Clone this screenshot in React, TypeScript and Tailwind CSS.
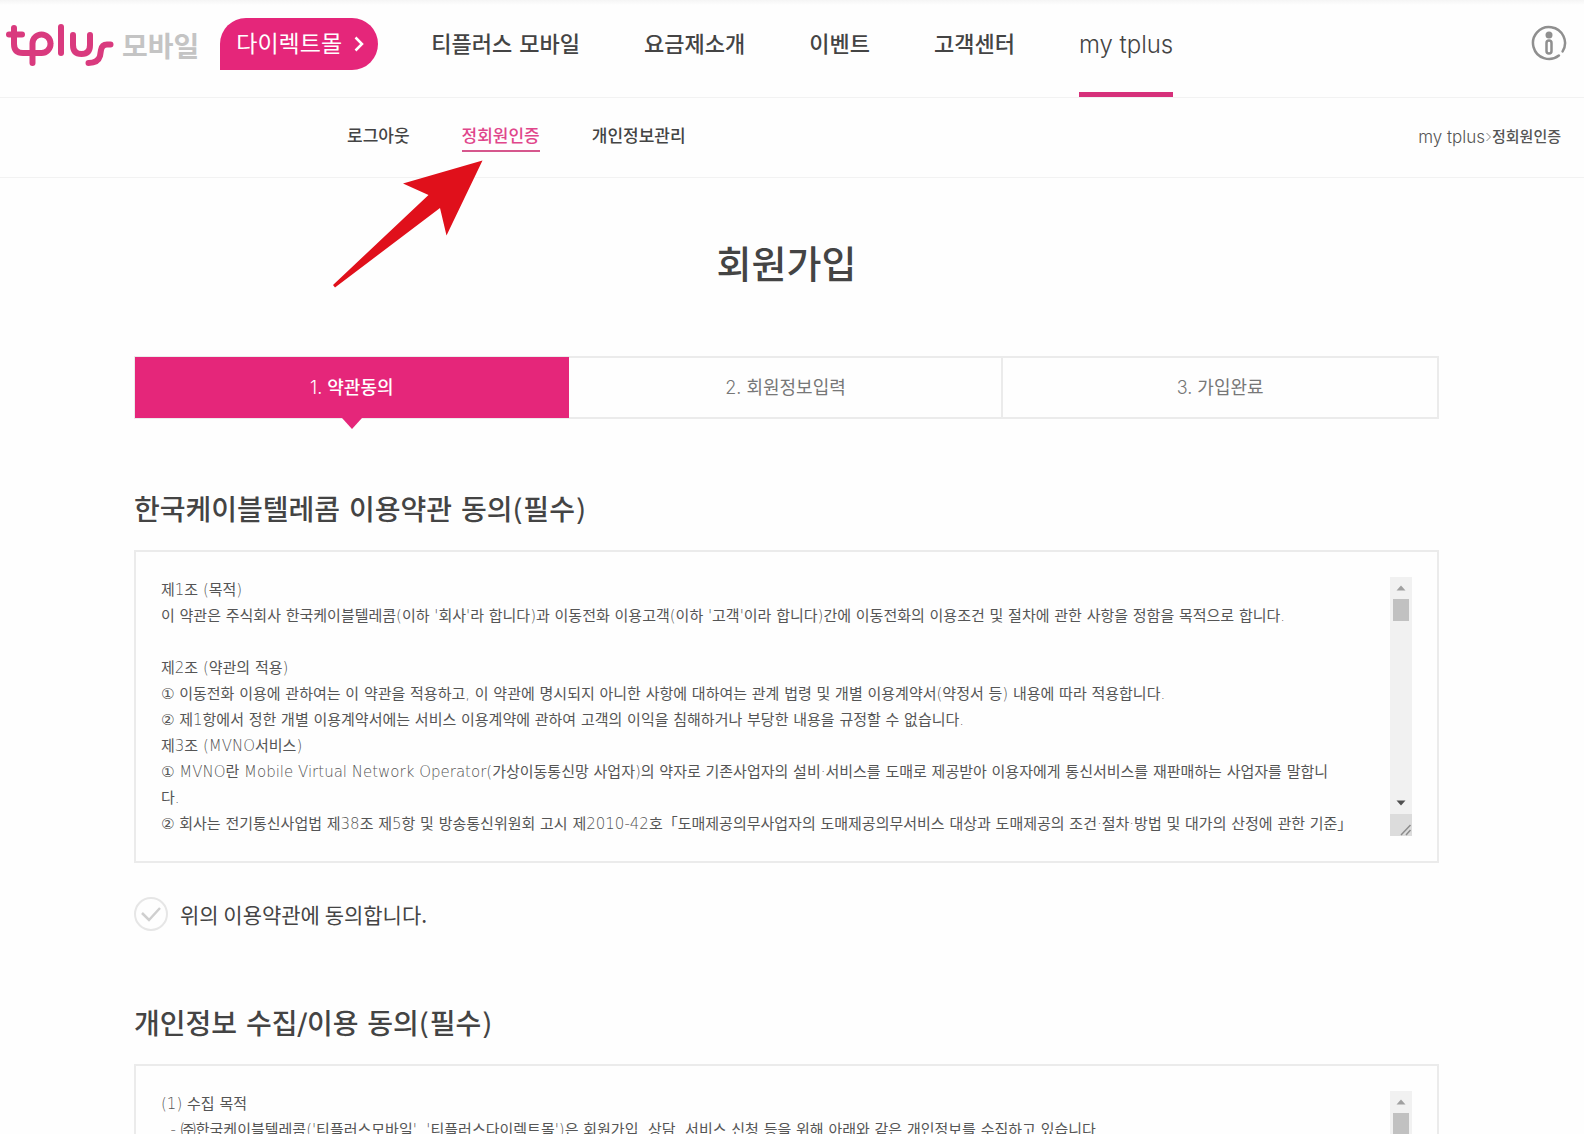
import React from "react";

const MAIN_MENU = [
  { label: "티플러스 모바일", active: false },
  { label: "요금제소개", active: false },
  { label: "이벤트", active: false },
  { label: "고객센터", active: false },
  { label: "my tplus", active: true },
];

const SUB_MENU = [
  { label: "로그아웃", active: false },
  { label: "정회원인증", active: true },
  { label: "개인정보관리", active: false },
];

const TERMS = `제1조 (목적)
이 약관은 주식회사 한국케이블텔레콤(이하 '회사'라 합니다)과 이동전화 이용고객(이하 '고객'이라 합니다)간에 이동전화의 이용조건 및 절차에 관한 사항을 정함을 목적으로 합니다.

제2조 (약관의 적용)
① 이동전화 이용에 관하여는 이 약관을 적용하고, 이 약관에 명시되지 아니한 사항에 대하여는 관계 법령 및 개별 이용계약서(약정서 등) 내용에 따라 적용합니다.
② 제1항에서 정한 개별 이용계약서에는 서비스 이용계약에 관하여 고객의 이익을 침해하거나 부당한 내용을 규정할 수 없습니다.
제3조 (MVNO서비스)
① MVNO란 Mobile Virtual Network Operator(가상이동통신망 사업자)의 약자로 기존사업자의 설비·서비스를 도매로 제공받아 이용자에게 통신서비스를 재판매하는 사업자를 말합니
다.
② 회사는 전기통신사업법 제38조 제5항 및 방송통신위원회 고시 제2010-42호「도매제공의무사업자의 도매제공의무서비스 대상과 도매제공의 조건·절차·방법 및 대가의 산정에 관한 기준」`;

const PRIVACY = `(1) 수집 목적
  - ㈜한국케이블텔레콤('티플러스모바일', '티플러스다이렉트몰')은 회원가입, 상담, 서비스 신청 등을 위해 아래와 같은 개인정보를 수집하고 있습니다.`;

function Logo() {
  return (
    <svg width="108" height="44" viewBox="6 24 108 44" fill="none" stroke="#d93a7e" strokeWidth="6" strokeLinecap="round" strokeLinejoin="round" aria-label="tplus" role="img">
      <path d="M14 28V44Q14 53 23 53H41A9 9 0 0 0 50.500 43.500A9 9 0 0 0 41.500 34.500A9 9 0 0 0 32.500 43.500V63" />
      <path d="M9 34.500H22" />
      <path d="M61 27V53" />
      <path d="M73 35V45Q73 54 81.500 54Q90 54 90 45V35" />
      <path d="M110.500 44.500H107Q102 44.500 101 50L100 56Q98 63 88.500 63" />
    </svg>
  );
}

function InfoIcon() {
  return (
    <svg width="36" height="36" viewBox="0 0 36 36" fill="none" stroke="#8f8f8f" strokeWidth="2.500" strokeLinecap="round">
      <path d="M27 31.200A16 16 0 1 1 31 27.300" transform="rotate(-4 18 18)" />
      <circle cx="18" cy="10" r="3.500" fill="#8f8f8f" stroke="none" />
      <rect x="15.500" y="15.500" width="5" height="13" rx="2.500" />
    </svg>
  );
}

function Scrollbar() {
  return (
    <div className="flex w-[22px] shrink-0 flex-col bg-[#f1f1f1]" aria-hidden="true">
      <svg width="22" height="22" viewBox="0 0 22 22">
        <path d="M6.500 13.500L11 8.500L15.500 13.500Z" fill="#a0a0a0" />
      </svg>
      <div className="mx-[3px] h-[22px] bg-[#c1c1c1]" />
      <div className="grow" />
      <svg width="22" height="22" viewBox="0 0 22 22">
        <path d="M6.500 8.500L11 13.500L15.500 8.500Z" fill="#505050" />
      </svg>
      <svg width="22" height="22" viewBox="0 0 22 22" className="bg-[#dcdcdc]">
        <path d="M11 21L20.500 11M16 21L20.500 16" stroke="#8c8c8c" strokeWidth="1.500" />
      </svg>
    </div>
  );
}

function TermsBox({ id, text }: { id: string; text: string }) {
  return (
    <div className="flex border-2 border-[#ebebeb] p-[25px]">
      <textarea
        aria-labelledby={id}
        readOnly
        defaultValue={text}
        className="h-[259px] min-w-0 grow resize-none overflow-hidden text-[15px] leading-[26px] text-[#555] outline-none"
      />
      <Scrollbar />
    </div>
  );
}

export default function App() {
  return (
    <div className="relative h-screen overflow-x-hidden overflow-y-auto bg-[#fefefe] font-['DejaVu_Sans_Light','DejaVu_Sans','Noto_Sans_CJK_KR',sans-serif] text-[#444] [scrollbar-width:none]">
      <header className="flex h-[98px] items-start border-b border-[#f2f2f2] bg-linear-to-b from-[#f5f5f5] to-[#fefefe] to-[5px] pr-[17px] pl-[6px]">
        <a href="#" className="mt-6 flex items-start gap-2">
          <Logo />
          <span className="pt-[2px] text-[28px] leading-[44px] font-bold text-[#c4c4c4]">모바일</span>
        </a>
        <a href="#" className="mt-[18px] ml-[21px] flex h-[52px] w-[158px] items-center gap-3 rounded-[26px] rounded-bl-none bg-[#e5267a] pl-4 text-[23px] text-white">
          다이렉트몰
          <svg width="10" height="16" viewBox="0 0 10 16" fill="none" stroke="currentColor" strokeWidth="2.500">
            <path d="M1.500 1.500L8 8L1.500 14.500" />
          </svg>
        </a>
        <nav className="ml-[53px] flex h-[97px] gap-16">
          {MAIN_MENU.map((m) => (
            <a
              key={m.label}
              href="#"
              className={
                m.active
                  ? "border-b-[5px] border-[#d6307a] pt-[28px] font-[Inter,sans-serif] text-[24px] leading-[33px] font-light whitespace-nowrap"
                  : "pt-[28px] text-[22px] leading-[33px] font-medium whitespace-nowrap"
              }
            >
              {m.label}
            </a>
          ))}
        </nav>
        <button type="button" aria-label="안내" className="mt-[25px] ml-auto">
          <InfoIcon />
        </button>
      </header>

      <div className="flex h-[80px] items-start justify-between border-b border-[#f2f2f2] pr-[23px] pl-[347px]">
        <nav className="flex gap-[52px] pt-[24px]">
          {SUB_MENU.map((m) => (
            <a
              key={m.label}
              href="#"
              className={
                m.active
                  ? "border-b-2 border-[#d6578d] text-[17px] leading-[28px] font-medium text-[#e0468b]"
                  : "text-[17px] leading-[28px] font-medium"
              }
            >
              {m.label}
            </a>
          ))}
        </nav>
        <div className="flex items-center pt-[27px] text-[15px] leading-6 text-[#555]">
          <span className="font-[Inter,sans-serif] text-[17px] leading-6 font-light">my tplus</span>
          <svg width="7" height="10" viewBox="0 0 7 10" fill="none" stroke="#888" strokeWidth="1" aria-hidden="true">
            <path d="M1.500 1L5.500 5L1.500 9" />
          </svg>
          <span className="font-medium">정회원인증</span>
        </div>
      </div>

      <main className="pr-[145px] pl-[134px]">
        <h1 className="pt-[59px] text-center text-[38px] leading-[56px] font-medium">회원가입</h1>

        <ol className="mt-[63px] grid h-[63px] grid-cols-3 border-2 border-[#ebebeb] text-center font-[Inter,'Noto_Sans_CJK_KR',sans-serif] text-[18px] leading-[59px] text-[#777]">
          <li className="relative -my-px mr-px -ml-px bg-[#e5267a] pt-px text-white">
            <span className="font-light">1.</span> <span className="font-medium">약관동의</span>
            <svg width="20" height="12" viewBox="0 0 20 12" className="absolute top-full left-1/2 -ml-[10px]">
              <path d="M0 0H20L10 11Z" fill="#e5267a" />
            </svg>
          </li>
          <li className="border-r-2 border-[#ebebeb]">
            <span className="font-light">2.</span> 회원정보입력
          </li>
          <li>
            <span className="font-light">3.</span> 가입완료
          </li>
        </ol>

        <section className="pt-[72px]">
          <h2 id="terms-title" className="mb-[19px] text-[28px] leading-[40px] font-medium">
            한국케이블텔레콤 이용약관 동의(필수)
          </h2>
          <TermsBox id="terms-title" text={TERMS} />
          <label className="mt-[34px] flex w-fit items-center gap-3 font-['Noto_Sans_CJK_KR',sans-serif] text-[21px] leading-[34px] text-[#444]">
            <span className="grid size-[34px]">
              <input type="checkbox" className="col-start-1 row-start-1 size-[34px] appearance-none rounded-full border-2 border-[#e6e6e6]" />
              <svg width="34" height="34" viewBox="0 0 34 34" fill="none" stroke="#cfcfcf" strokeWidth="2.500" className="pointer-events-none col-start-1 row-start-1">
                <path d="M8 16L15 23L26 11" />
              </svg>
            </span>
            위의 이용약관에 동의합니다.
          </label>
        </section>

        <section className="pt-[74px]">
          <h2 id="privacy-title" className="mb-[19px] text-[28px] leading-[40px] font-medium">
            개인정보 수집/이용 동의(필수)
          </h2>
          <TermsBox id="privacy-title" text={PRIVACY} />
        </section>
      </main>

      <svg width="152" height="130" viewBox="332 159 152 130" className="pointer-events-none absolute top-[159px] left-[332px]" aria-hidden="true">
        <path d="M482.500 160.500L403 183.500L428.500 195L333 285L335 287.500L440 208L446.500 235.500Z" fill="#e0101b" />
      </svg>
    </div>
  );
}
